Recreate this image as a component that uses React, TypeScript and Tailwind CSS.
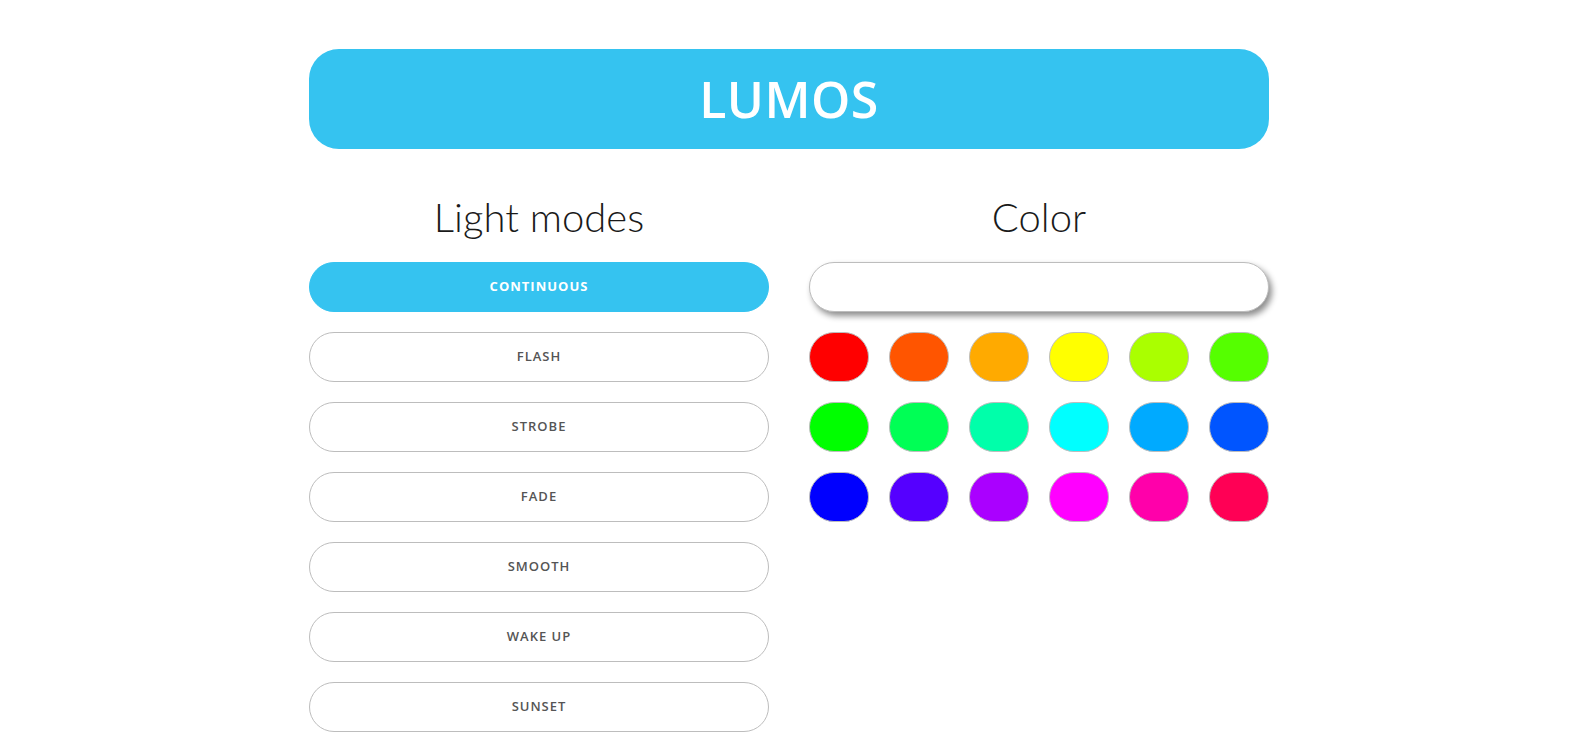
import React, { useState } from 'react';

const MODES = ['Continuous', 'Flash', 'Strobe', 'Fade', 'Smooth', 'Wake up', 'Sunset'];

const SWATCHES = [
  '#ff0000', '#ff5500', '#ffaa00', '#ffff00', '#aaff00', '#55ff00',
  '#00ff00', '#00ff55', '#00ffaa', '#00ffff', '#00aaff', '#0055ff',
  '#0000ff', '#5500ff', '#aa00ff', '#ff00ff', '#ff00aa', '#ff0055',
];

export default function App() {
  const [mode, setMode] = useState('Continuous');
  const [color, setColor] = useState('');

  return (
    <div className="min-h-screen bg-white font-['Open_Sans',sans-serif]">
      <div className="mx-auto w-[960px] pt-[49px] pb-10">
        {/* Title bar */}
        <header className="flex h-[100px] items-center justify-center rounded-[30px] bg-[#35c3f0]">
          <h1 className="font-['Open_Sans',sans-serif] text-[50px] font-semibold tracking-[0.5px] text-white">
            LUMOS
          </h1>
        </header>

        <div className="grid grid-cols-2 gap-[40px]">
          {/* Light modes */}
          <section>
            <h2 className="mt-[40px] mb-[17px] text-center font-['Lato',sans-serif] text-[40px] leading-[56px] font-light text-[#1a1a1a]">
              Light modes
            </h2>
            <div className="flex flex-col gap-[20px]">
              {MODES.map((m) => (
                <button
                  key={m}
                  onClick={() => setMode(m)}
                  className={
                    m === mode
                      ? 'h-[50px] rounded-full border border-[#35c3f0] bg-[#35c3f0] text-[13px] font-bold uppercase tracking-[1px] text-white'
                      : 'h-[50px] rounded-full border border-[#bdbdbd] bg-white text-[13px] font-semibold uppercase tracking-[1px] text-[#555]'
                  }
                >
                  {m}
                </button>
              ))}
            </div>
          </section>

          {/* Color */}
          <section>
            <h2 className="mt-[40px] mb-[17px] text-center font-['Lato',sans-serif] text-[40px] leading-[56px] font-light text-[#1a1a1a]">
              Color
            </h2>
            <input
              value={color}
              onChange={(e) => setColor(e.target.value)}
              className="block h-[50px] w-full rounded-full border border-[#bdbdbd] bg-white px-6 shadow-[3px_4px_6px_rgba(0,0,0,0.45)] outline-none"
            />
            <div className="mt-[20px] grid grid-cols-6 gap-x-[20px] gap-y-[20px]">
              {SWATCHES.map((c) => (
                <button
                  key={c}
                  onClick={() => setColor(c)}
                  className="h-[50px] w-[60px] rounded-full border border-[#bdbdbd]"
                  style={{ backgroundColor: c }}
                />
              ))}
            </div>
          </section>
        </div>
      </div>
    </div>
  );
}
